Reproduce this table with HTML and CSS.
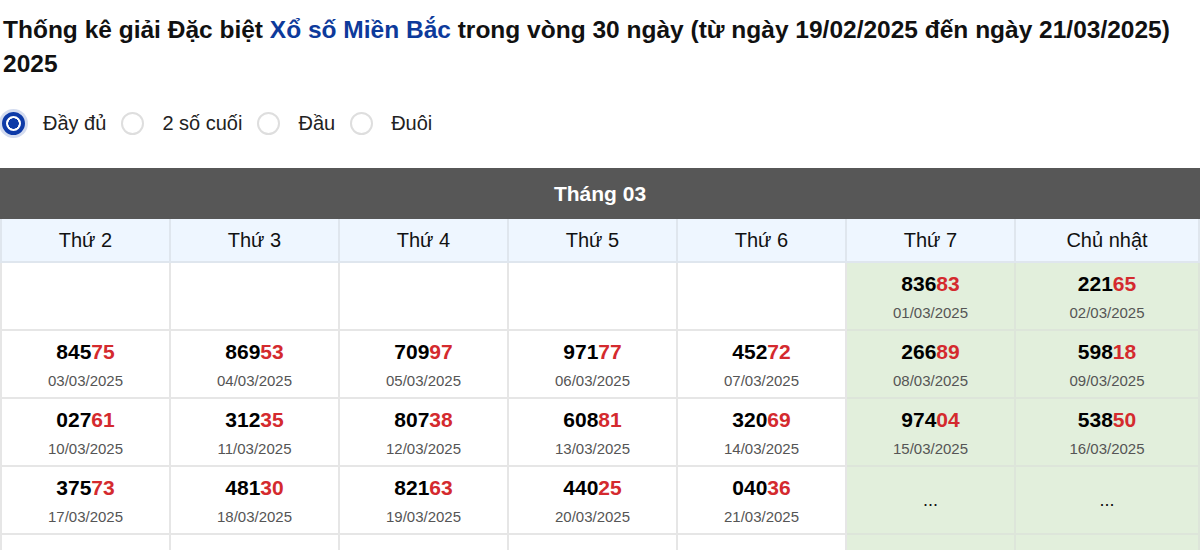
FILE: index.html
```html
<!DOCTYPE html>
<html lang="vi">
<head>
<meta charset="utf-8">
<title>Thống kê giải Đặc biệt</title>
<link rel="stylesheet" href="styles.css">
</head>
<body>
<h1 class="title">Thống kê giải Đặc biệt <span class="hl">Xổ số Miền Bắc</span> trong vòng 30 ngày (từ ngày 19/02/2025 đến ngày 21/03/2025) 2025</h1>
<div class="options">
  <label class="opt"><span class="radio checked"></span><span>Đầy đủ</span></label>
  <label class="opt"><span class="radio"></span><span>2 số cuối</span></label>
  <label class="opt"><span class="radio"></span><span>Đầu</span></label>
  <label class="opt"><span class="radio"></span><span>Đuôi</span></label>
</div>
<table class="cal">
  <colgroup>
    <col class="c"><col class="c"><col class="c"><col class="c"><col class="c"><col class="c"><col>
  </colgroup>
  <thead>
    <tr><th colspan="7" class="month">Tháng 03</th></tr>
    <tr class="days"><th>Thứ 2</th><th>Thứ 3</th><th>Thứ 4</th><th>Thứ 5</th><th>Thứ 6</th><th>Thứ 7</th><th>Chủ nhật</th></tr>
  </thead>
  <tbody>
    <tr>
      <td></td><td></td><td></td><td></td><td></td>
      <td class="we"><div class="num">836<span>83</span></div><div class="date">01/03/2025</div></td>
      <td class="we"><div class="num">221<span>65</span></div><div class="date">02/03/2025</div></td>
    </tr>
    <tr>
      <td><div class="num">845<span>75</span></div><div class="date">03/03/2025</div></td>
      <td><div class="num">869<span>53</span></div><div class="date">04/03/2025</div></td>
      <td><div class="num">709<span>97</span></div><div class="date">05/03/2025</div></td>
      <td><div class="num">971<span>77</span></div><div class="date">06/03/2025</div></td>
      <td><div class="num">452<span>72</span></div><div class="date">07/03/2025</div></td>
      <td class="we"><div class="num">266<span>89</span></div><div class="date">08/03/2025</div></td>
      <td class="we"><div class="num">598<span>18</span></div><div class="date">09/03/2025</div></td>
    </tr>
    <tr>
      <td><div class="num">027<span>61</span></div><div class="date">10/03/2025</div></td>
      <td><div class="num">312<span>35</span></div><div class="date">11/03/2025</div></td>
      <td><div class="num">807<span>38</span></div><div class="date">12/03/2025</div></td>
      <td><div class="num">608<span>81</span></div><div class="date">13/03/2025</div></td>
      <td><div class="num">320<span>69</span></div><div class="date">14/03/2025</div></td>
      <td class="we"><div class="num">974<span>04</span></div><div class="date">15/03/2025</div></td>
      <td class="we"><div class="num">538<span>50</span></div><div class="date">16/03/2025</div></td>
    </tr>
    <tr>
      <td><div class="num">375<span>73</span></div><div class="date">17/03/2025</div></td>
      <td><div class="num">481<span>30</span></div><div class="date">18/03/2025</div></td>
      <td><div class="num">821<span>63</span></div><div class="date">19/03/2025</div></td>
      <td><div class="num">440<span>25</span></div><div class="date">20/03/2025</div></td>
      <td><div class="num">040<span>36</span></div><div class="date">21/03/2025</div></td>
      <td class="we"><div class="dots">...</div></td>
      <td class="we"><div class="dots">...</div></td>
    </tr>
    <tr>
      <td></td><td></td><td></td><td></td><td></td>
      <td class="we"></td><td class="we"></td>
    </tr>
  </tbody>
</table>
</body>
</html>
```
FILE: styles.css
```css
html, body {
  margin: 0;
  padding: 0;
  background: #fff;
}
body {
  font-family: "Liberation Sans", Arial, sans-serif;
  color: #000;
}
.title {
  margin: 0;
  padding: 13px 3px 0;
  font-size: 24.5px;
  line-height: 34px;
  font-weight: bold;
  color: #111;
}
.hl {
  color: #0d3a9b;
}
.options {
  display: flex;
  align-items: center;
  padding: 0 2px;
  margin-top: 27px;
  height: 30px;
}
.opt {
  display: flex;
  align-items: center;
  font-size: 20px;
  color: #222;
  margin-right: 15px;
}
.radio {
  box-sizing: border-box;
  width: 23px;
  height: 23px;
  border-radius: 50%;
  border: 2px solid #dedede;
  margin-right: 18px;
  background: #fff;
}
.radio.checked {
  border: 4px solid #0d3aa8;
  background: radial-gradient(circle, #0d3aa8 0 5px, #fff 5.5px);
  box-shadow: 0 0 0 3px rgba(13, 58, 168, 0.18);
}
.cal {
  margin-top: 30px;
  width: 1200px;
  border-collapse: collapse;
  table-layout: fixed;
}
.cal col.c {
  width: 169px;
}
.cal th, .cal td {
  border: 2px solid #e6e6e6;
  text-align: center;
  padding: 0;
}
.month {
  background: #575757;
  color: #fff;
  font-size: 21px;
  font-weight: bold;
  height: 47px;
  border-color: #575757 !important;
}
.days th {
  background: #eef6ff;
  font-weight: normal;
  font-size: 20px;
  color: #111;
  height: 42px;
  border-color: #dfe6ee;
}
.cal td {
  height: 66px;
  vertical-align: top;
}
.cal td.we {
  background: #e2efdc;
  border-color: #dde5da;
}
.num {
  margin-top: 9px;
  font-size: 21px;
  font-weight: bold;
  line-height: 24px;
  color: #000;
}
.num span {
  color: #d42a2e;
}
.date {
  margin-top: 7px;
  font-size: 15px;
  line-height: 20px;
  color: #555;
}
.dots {
  margin-top: 23px;
  font-size: 18px;
  line-height: 20px;
  color: #111;
}
```
